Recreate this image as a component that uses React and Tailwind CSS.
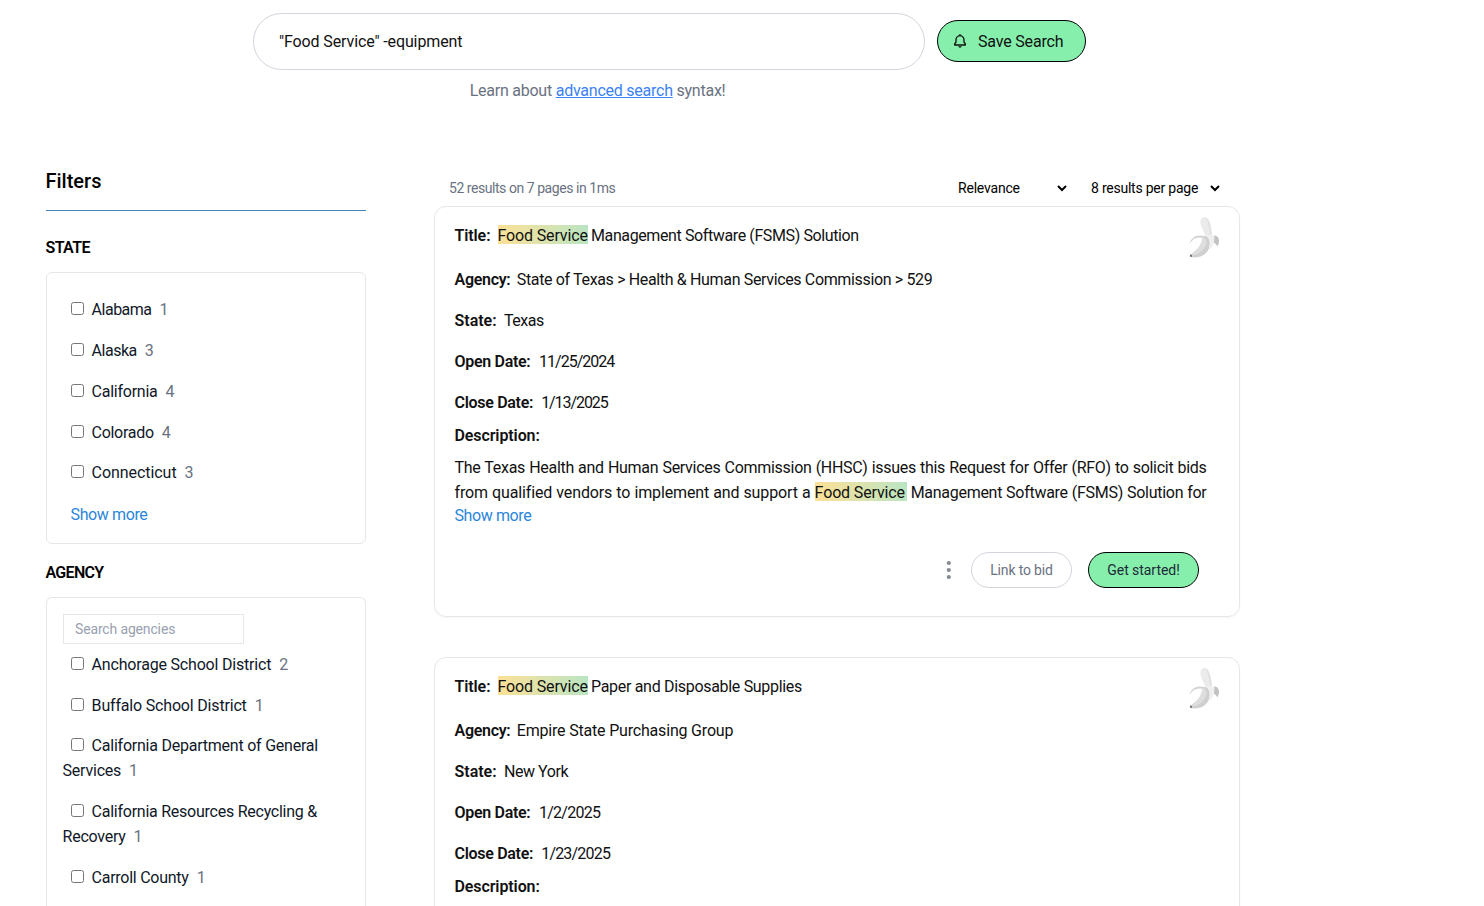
import { BiBell } from 'react-icons/bi';

const states = [
  { name: 'Alabama', count: 1, tracking: 'tracking-[-0.5px]' },
  { name: 'Alaska', count: 3, tracking: 'tracking-[-0.5px]' },
  { name: 'California', count: 4, tracking: 'tracking-[-0.25px]' },
  { name: 'Colorado', count: 4, tracking: 'tracking-[-0.3px]' },
  { name: 'Connecticut', count: 3, tracking: 'tracking-[-0.06px]' },
];

const agencies = [
  { name: 'Anchorage School District', count: 2, tracking: 'tracking-[-0.19px]' },
  { name: 'Buffalo School District', count: 1, tracking: 'tracking-[-0.18px]' },
  { name: 'California Department of General Services', count: 1, tracking: 'tracking-[-0.23px]' },
  { name: 'California Resources Recycling & Recovery', count: 1, tracking: 'tracking-[-0.25px]' },
  { name: 'Carroll County', count: 1, tracking: 'tracking-[-0.26px]' },
];

const bids = [
  {
    title: ['Management Software (FSMS) Solution', 'tracking-[-0.39px]'],
    agency: ['State of Texas > Health & Human Services Commission > 529', 'tracking-[-0.35px]'],
    state: ['Texas', 'tracking-[-0.5px]'],
    open: ['11/25/2024', 'tracking-[-0.98px]'],
    close: ['1/13/2025', 'tracking-[-1.08px]'],
  },
  {
    title: ['Paper and Disposable Supplies', 'tracking-[-0.31px]'],
    agency: ['Empire State Purchasing Group', 'tracking-[-0.19px]'],
    state: ['New York', 'tracking-[-0.45px]'],
    open: ['1/2/2025', 'tracking-[-0.75px]'],
    close: ['1/23/2025', 'tracking-[-0.8px]'],
  },
];

const Mark = ({ width = 'w-[90.5px]', children }) => (
  <mark
    className={`${width} mb-0.5 inline-block h-[19px] whitespace-nowrap bg-linear-to-r from-[#fce096] to-[#b9e5c2] text-left leading-[22px] tracking-[-0.14px] text-[#111] [text-align-last:left]`}
  >
    {children}
  </mark>
);

const Banana = () => (
  <svg className="absolute right-[19px] top-[9px] h-[44px] w-[32px]" viewBox="0 0 32 44" fill="none">
    <path d="M12.5 7C12 3 14 .5 17 1c4 1 6.500 9 7 20l-6 3c0-6-4.500-11-5.500-17Z" fill="#ebebeb" />
    <path d="M17 1c4 1 6.500 9 7 20l-2 1c-.5-8-1-16-5-21Z" fill="#e1e1e1" />
    <path d="M1.500 28C3 21 9 18 16 20l1 3c-7-3-11.500-1.500-15.500 5Z" fill="#d2d2d2" />
    <path d="M26 19.500c5 0 6.500 5 3.500 11-1-2-2-3-4-4Z" fill="#c2c2c2" />
    <path d="M15.500 20C22 20 24 27 20.500 33.500C17 40.500 9 42.500 2 41L1.500 39C9 35 14 29 15.500 20Z" fill="#cfcfcf" />
    <path d="M14.500 21C18.500 22 20 26 17 31C14 36 8 39.500 2.500 39.500C9 35 13.500 29 14.500 21Z" fill="#dedede" />
    <path d="M18 19.500c3-1.500 7-1 8.500 1 0 6-1.500 9.500-4.500 13-1.500-1-1-3-.5-6 .3-3-1-6-3.500-8Z" fill="#efefef" />
    <path d="M2 38.500l2 .5v2l-2-.5Z" fill="#777" />
  </svg>
);

const FilterRow = ({ item }) => (
  <div className="mb-4 text-base leading-[24.8px] text-gray-900">
    <input type="checkbox" className="ml-2 mr-2 h-[13px] w-[13px] align-[0px]" />
    <span className={item.tracking}>{item.name}</span>
    <span className="ml-2 text-gray-500">{item.count}</span>
  </div>
);

const Field = ({ label, width, tracking = '', value }) => (
  <div className="mb-4 flex h-[25px] items-center whitespace-nowrap leading-[25px]">
    <span className={`${width} ${tracking} shrink-0 font-semibold`}>{label}</span>
    <span className={value[1]}>{value[0]}</span>
  </div>
);

const BidCard = ({ bid }) => (
  <article className="relative mb-10 h-[411px] rounded-xl border border-gray-200 pl-[19.5px] pr-5 pt-4 shadow-[0_1px_2px_rgba(0,0,0,0.04)]">
    <Banana />
    <div className="mb-[19px] flex h-[25px] items-center whitespace-nowrap">
      <span className="w-[43px] shrink-0 font-semibold tracking-[-0.1px]">Title:</span>
      <Mark>Food Service</Mark>
      <span className={`ml-[3px] ${bid.title[1]}`}>{bid.title[0]}</span>
    </div>
    <Field label="Agency:" width="w-[62.3px]" tracking="tracking-[-0.3px]" value={bid.agency} />
    <Field label="State:" width="w-[49.5px]" value={bid.state} />
    <Field label="Open Date:" width="w-[84.5px]" tracking="tracking-[-0.3px]" value={bid.open} />
    <Field label="Close Date:" width="w-[86.7px]" tracking="tracking-[-0.3px]" value={bid.close} />
    <div className="-mt-2 h-[25px] font-semibold leading-[25px] tracking-[-0.1px]">Description:</div>
    <div className="mt-[7px] w-[752px] leading-[25px] [text-align-last:justify]">
      <div className="h-[25px] tracking-[-0.29px]">
        The Texas Health and Human Services Commission (HHSC) issues this Request for Offer (RFO) to solicit bids
      </div>
      <div className="h-[25px]">
        <span className="tracking-[-0.14px]">from qualified vendors to implement and support a </span>
        <Mark width="w-[92px]">Food Service</Mark>
        <span className="tracking-[-0.28px]"> Management Software (FSMS) Solution for</span>
      </div>
    </div>
    <a className="block h-[22px] leading-[22px] tracking-[-0.4px] text-[#2b86d9]">Show more</a>
    <div className="mr-5 mt-[25px] flex items-center justify-end">
      <svg className="mr-5 h-[20px] w-[5px]" viewBox="0 0 5 20" fill="#858b93">
        <circle cx="2.800" cy="3" r="2.100" />
        <circle cx="2.800" cy="10" r="2.100" />
        <circle cx="2.800" cy="17" r="2.100" />
      </svg>
      <button className="mr-4 h-9 w-[101px] rounded-full border border-gray-300 text-sm tracking-[-0.15px] text-gray-500">Link to bid</button>
      <button className="h-9 w-[111px] rounded-full border border-black bg-[#86efac] text-sm tracking-[-0.05px] text-gray-800">Get started!</button>
    </div>
  </article>
);

const App = () => (
  <div className="h-[906px] overflow-hidden bg-white font-['Roboto',sans-serif] text-base text-[#111]">
    <header className="pt-[13px]">
      <div className="ml-[253px] flex items-start">
        <input
          defaultValue={'"Food Service" -equipment'}
          className="h-[57px] w-[672px] rounded-full border border-gray-300 px-[25px] tracking-[-0.12px] outline-none"
        />
        <button className="ml-3 mt-[7px] flex h-[42px] w-[149px] items-center rounded-full border border-black bg-[#86efac] pl-[14px] tracking-[-0.18px]">
          <BiBell className="mr-[10px] h-4 w-4" />
          <span className="pt-px">Save Search</span>
        </button>
      </div>
      <p className="ml-[469.7px] mt-2 h-[25px] whitespace-nowrap leading-[25px] tracking-[-0.24px] text-gray-500">
        Learn about <a className="text-[#3b82f6] underline">advanced search</a> syntax!
      </p>
    </header>

    <div className="ml-[46px] mt-[63px] flex items-start">
      <aside className="w-[320px] shrink-0">
        <h2 className="h-[45px] border-b border-[#4682b4] pt-px text-xl font-medium leading-[28px] text-black">
          <span className="-ml-[0.5px]">Filters</span>
        </h2>
        <h3 className="-ml-[0.5px] mt-6 h-[25px] font-semibold leading-[25px] tracking-[-0.6px] text-black">STATE</h3>
        <div className="mt-[12px] h-[272px] rounded-md border border-gray-200 pl-[15.6px] pr-4 pt-[25.3px]">
          {states.map((item) => (
            <FilterRow key={item.name} item={item} />
          ))}
          <a className="ml-2 block leading-[25px] tracking-[-0.4px] text-[#2b86d9]">Show more</a>
        </div>
        <h3 className="-ml-[0.5px] mt-4 h-[25px] font-semibold leading-[25px] tracking-[-0.7px] text-black">AGENCY</h3>
        <div className="mt-3 h-[309px] rounded-t-md border border-b-0 border-gray-200 pl-[15.6px] pr-4 pt-4">
          <input
            placeholder="Search agencies"
            className="mb-[8.9px] block h-[30px] w-[181px] border border-gray-200 px-[11.4px] text-sm tracking-[-0.15px] placeholder:text-gray-400"
          />
          {agencies.map((item) => (
            <FilterRow key={item.name} item={item} />
          ))}
        </div>
      </aside>

      <main className="ml-[68px] w-[806px] shrink-0">
        <div className="mt-2 flex h-[32px] items-center pb-[5px] text-sm">
          <span className="ml-[15px] tracking-[-0.45px] text-gray-500">52 results on 7 pages in 1ms</span>
          <select className="ml-auto w-[116px] bg-white tracking-[-0.2px] text-black">
            <option>Relevance</option>
          </select>
          <select className="ml-[17px] mr-[17px] w-[136px] bg-white tracking-[-0.23px] text-black">
            <option>8 results per page</option>
          </select>
        </div>
        {bids.map((bid) => (
          <BidCard key={bid.agency[0]} bid={bid} />
        ))}
      </main>
    </div>
  </div>
);

export default App;
